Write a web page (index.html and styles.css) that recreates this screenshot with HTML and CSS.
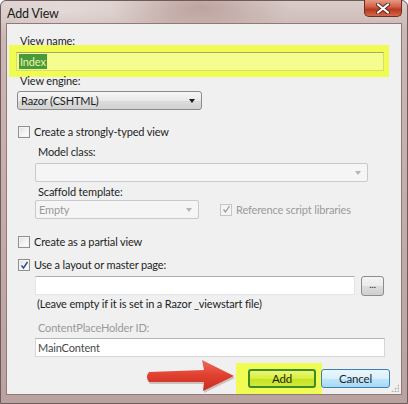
FILE: index.html
```html
<!DOCTYPE html>
<html lang="en">
<head>
    <meta charset="UTF-8">
    <title>Add View</title>
    <link rel="stylesheet" href="styles.css">
</head>
<body>
    <div class="window">
        <div class="titlebar">
            <span class="title">Add View</span>
            <div class="close">
                <svg width="14" height="11" viewBox="0 0 14 11">
                    <path d="M2 1.5 L12 9.5 M12 1.5 L2 9.5" stroke="#5a2a22" stroke-width="4" stroke-linecap="round"/>
                    <path d="M2 1.5 L12 9.5 M12 1.5 L2 9.5" stroke="#ffffff" stroke-width="2.2" stroke-linecap="round"/>
                </svg>
            </div>
        </div>

        <div class="client">
            <div class="label">View name:</div>
            <div class="marker name-marker">
                <div class="textbox"><span class="selected">Index</span></div>
            </div>

            <div class="label engine-label">View engine:</div>
            <div class="combo engine"><span>Razor (CSHTML)</span><i class="caret"></i></div>

            <div class="check strong">
                <span class="box"></span>
                <span>Create a strongly-typed view</span>
            </div>

            <div class="indent">
                <div class="label dim-label model-label">Model class:</div>
                <div class="combo disabled model"><span></span><i class="caret"></i></div>
                <div class="label scaffold-label">Scaffold template:</div>
                <div class="scaffold-row">
                    <div class="combo disabled scaffold"><span>Empty</span><i class="caret"></i></div>
                    <div class="check disabled ref">
                        <span class="box">
                            <svg width="9" height="9" viewBox="0 0 9 9"><path d="M1.5 4.5 L3.5 7 L7.5 1" fill="none" stroke="#9a9a9a" stroke-width="1.3"/></svg>
                        </span>
                        <span>Reference script libraries</span>
                    </div>
                </div>
            </div>

            <div class="check partial">
                <span class="box"></span>
                <span>Create as a partial view</span>
            </div>
            <div class="check layout">
                <span class="box">
                    <svg width="9" height="9" viewBox="0 0 9 9"><path d="M1.5 4.5 L3.5 7 L7.5 1" fill="none" stroke="#2e4a8e" stroke-width="1.4"/></svg>
                </span>
                <span>Use a layout or master page:</span>
            </div>

            <div class="indent">
                <div class="layout-row">
                    <div class="textbox layout-path"></div>
                    <div class="browse">...</div>
                </div>
                <div class="hint">(Leave empty if it is set in a Razor _viewstart file)</div>
                <div class="label disabled-text holder-label">ContentPlaceHolder ID:</div>
                <div class="textbox holder">MainContent</div>
            </div>

            <div class="actions">
                <div class="marker add-marker">
                    <div class="btn add">Add</div>
                </div>
                <div class="btn cancel">Cancel</div>
            </div>

            <div class="grip"></div>
        </div>

        <svg class="callout" width="100" height="40" viewBox="0 0 100 40">
            <defs>
                <linearGradient id="arrowfill" x1="0" y1="0" x2="0" y2="1">
                    <stop offset="0" stop-color="#ef6a5a"/>
                    <stop offset="0.5" stop-color="#e0402f"/>
                    <stop offset="1" stop-color="#c52e22"/>
                </linearGradient>
            </defs>
            <path d="M8 16 L63 14 L61 4 L93 20 L62 35 L63 26 L8 26 Q4 21 8 16 Z" fill="#8a6b62" opacity="0.35" transform="translate(1 2)"/>
            <path d="M8 16 L63 14 L61 4 L93 20 L62 35 L63 26 L8 26 Q4 21 8 16 Z" fill="url(#arrowfill)"/>
        </svg>
    </div>
</body>
</html>
```

FILE: styles.css
```css
* {
    margin: 0;
    padding: 0;
    box-sizing: border-box;
}

:root {
    --client: #f0f0f0;
    --text: #1e1e1e;
    --dim: #9a9a9a;
    --marker: rgba(240, 255, 40, 0.78);
}

body {
    background: #ffffff;
    font-family: "Lato", "Open Sans", sans-serif;
    font-size: 11px;
    letter-spacing: -0.15px;
    color: var(--text);
}

.window {
    position: relative;
    width: 408px;
    height: 404px;
    display: flex;
    flex-direction: column;
    padding-bottom: 8px;
    background:
        radial-gradient(ellipse 90px 30px at 200px 6px, rgba(160, 120, 115, 0.45), transparent),
        radial-gradient(ellipse 120px 30px at 60px 10px, rgba(255, 255, 255, 0.35), transparent),
        linear-gradient(180deg, #d9ccc9 0, #cbb7b4 30px, #b9a2a0 100%);
    border: 1px solid #6f5c5a;
    border-radius: 6px 6px 0 0;
}

.titlebar {
    height: 22px;
    display: flex;
    align-items: center;
    justify-content: space-between;
    padding-left: 6px;
}

.title {
    font-size: 12.5px;
    color: #1a1a1a;
    margin-top: 2px;
}

.close {
    align-self: flex-start;
    width: 38px;
    height: 17px;
    margin-right: 5px;
    margin-top: -1px;
    display: flex;
    align-items: center;
    justify-content: center;
    border: 1px solid #6e2b21;
    border-top: none;
    border-radius: 0 0 5px 5px;
    background: linear-gradient(180deg, #e59a85 0, #d2634a 40%, #b9391f 60%, #d6664a 100%);
}

.client {
    position: relative;
    flex: 1;
    margin: 0 5px;
    padding: 10px 16px 0 10px;
    background: var(--client);
    border: 1px solid #8f7a78;
    display: flex;
    flex-direction: column;
    align-items: flex-start;
}

.label {
    line-height: 14px;
    padding-left: 3px;
}

.marker {
    background: var(--marker);
}

.name-marker {
    align-self: stretch;
    margin: -3px -4px 0 -8px;
    padding: 7px 5px 6px 7px;
}

.textbox {
    height: 19px;
    background: #ffffff;
    border: 1px solid #e1e6ec;
    border-top-color: #abadb3;
    line-height: 17px;
    padding-left: 2px;
}

.name-marker .textbox {
    background: rgba(255, 255, 255, 0.35);
    border-color: #d7dc6a;
    border-top-color: #a5a86a;
}

.selected {
    background: #4b9a39;
    color: #e8f5a8;
    padding: 1px 1px;
}

.engine-label {
    margin-top: -3px;
}

.combo {
    display: flex;
    align-items: center;
    justify-content: space-between;
    height: 19px;
    padding: 0 6px 0 3px;
    border: 1px solid #8a8a8a;
    border-radius: 3px;
    background: linear-gradient(180deg, #f6f6f6 0, #e9e9e9 50%, #dcdcdc 51%, #d2d2d2 100%);
}

.engine {
    width: 185px;
    margin-top: 3px;
}

.caret {
    width: 0;
    height: 0;
    border-left: 3.5px solid transparent;
    border-right: 3.5px solid transparent;
    border-top: 4px solid #1a1a1a;
}

.combo.disabled {
    border-color: #c6cace;
    border-radius: 2px;
    background: #f5f5f5;
    color: var(--dim);
}

.combo.disabled .caret {
    border-top-color: #b5b5b5;
}

.check {
    display: flex;
    align-items: center;
    gap: 4px;
    line-height: 14px;
    padding-left: 1px;
}

.check .box {
    width: 12px;
    height: 12px;
    display: flex;
    align-items: center;
    justify-content: center;
    border: 1px solid #8e8f8f;
    background: linear-gradient(135deg, #dedede 0, #f6f6f6 60%, #ffffff 100%);
    box-shadow: inset 0 0 0 1px #f4f4f4;
}

.check.disabled {
    color: var(--dim);
}

.check.disabled .box {
    border-color: #c5c5c5;
    background: #f4f4f4;
}

.strong {
    margin-top: 15px;
}

.indent {
    align-self: stretch;
    padding-left: 18px;
    display: flex;
    flex-direction: column;
    align-items: flex-start;
}

.model-label {
    margin-top: 6px;
}

.model {
    width: 333px;
    margin-top: 4px;
}

.scaffold-label {
    margin-top: 3px;
}

.scaffold-row {
    display: flex;
    align-items: center;
    margin-top: 1px;
}

.scaffold {
    width: 164px;
}

.ref {
    margin-left: 20px;
    gap: 4px;
}

.partial {
    margin-top: 16px;
}

.layout {
    margin-top: 9px;
}

.layout-row {
    align-self: stretch;
    display: flex;
    gap: 6px;
    margin-top: 4px;
    padding-right: 1px;
}

.layout-path {
    width: 322px;
}

.browse {
    width: 23px;
    height: 20px;
    border: 1px solid #8c8c8c;
    border-radius: 3px;
    background: linear-gradient(180deg, #f4f4f4 0, #ebebeb 50%, #dddddd 51%, #cfcfcf 100%);
    text-align: center;
    line-height: 14px;
    font-size: 10px;
}

.hint {
    margin-top: 1px;
    padding-left: 2px;
    line-height: 14px;
}

.disabled-text {
    color: var(--dim);
}

.holder-label {
    margin-top: 10px;
}

.holder {
    align-self: stretch;
    margin-top: 3px;
    border-color: #d4d7da;
    border-top-color: #b4b7ba;
    color: #4a4a4a;
}

.actions {
    align-self: stretch;
    display: flex;
    justify-content: flex-end;
    align-items: center;
    margin-right: -5px;
    margin-top: 6px;
}

.add-marker {
    padding: 6px 6px 6px 12px;
}

.btn {
    height: 19px;
    border-radius: 3px;
    text-align: center;
    line-height: 17px;
    font-size: 11.5px;
}

.add {
    width: 68px;
    border: 2px solid #3d8a2a;
    line-height: 15px;
    background: linear-gradient(180deg, #eaf57a 0, #d8ef3a 50%, #c6e222 51%, #d2ea3a 100%);
}

.cancel {
    width: 69px;
    margin-left: -1px;
    border: 1px solid #3c7fb1;
    background: linear-gradient(180deg, #eaf6fd 0, #d9f0fc 50%, #bee6fd 51%, #a7d9f5 100%);
}

.grip {
    position: absolute;
    right: 2px;
    bottom: 2px;
    width: 8px;
    height: 8px;
    background: radial-gradient(circle, #b0b0b0 0.8px, transparent 1.2px) 0 0 / 3px 3px;
    clip-path: polygon(100% 0, 100% 100%, 0 100%);
}

.callout {
    position: absolute;
    left: 140px;
    top: 355px;
}
```
